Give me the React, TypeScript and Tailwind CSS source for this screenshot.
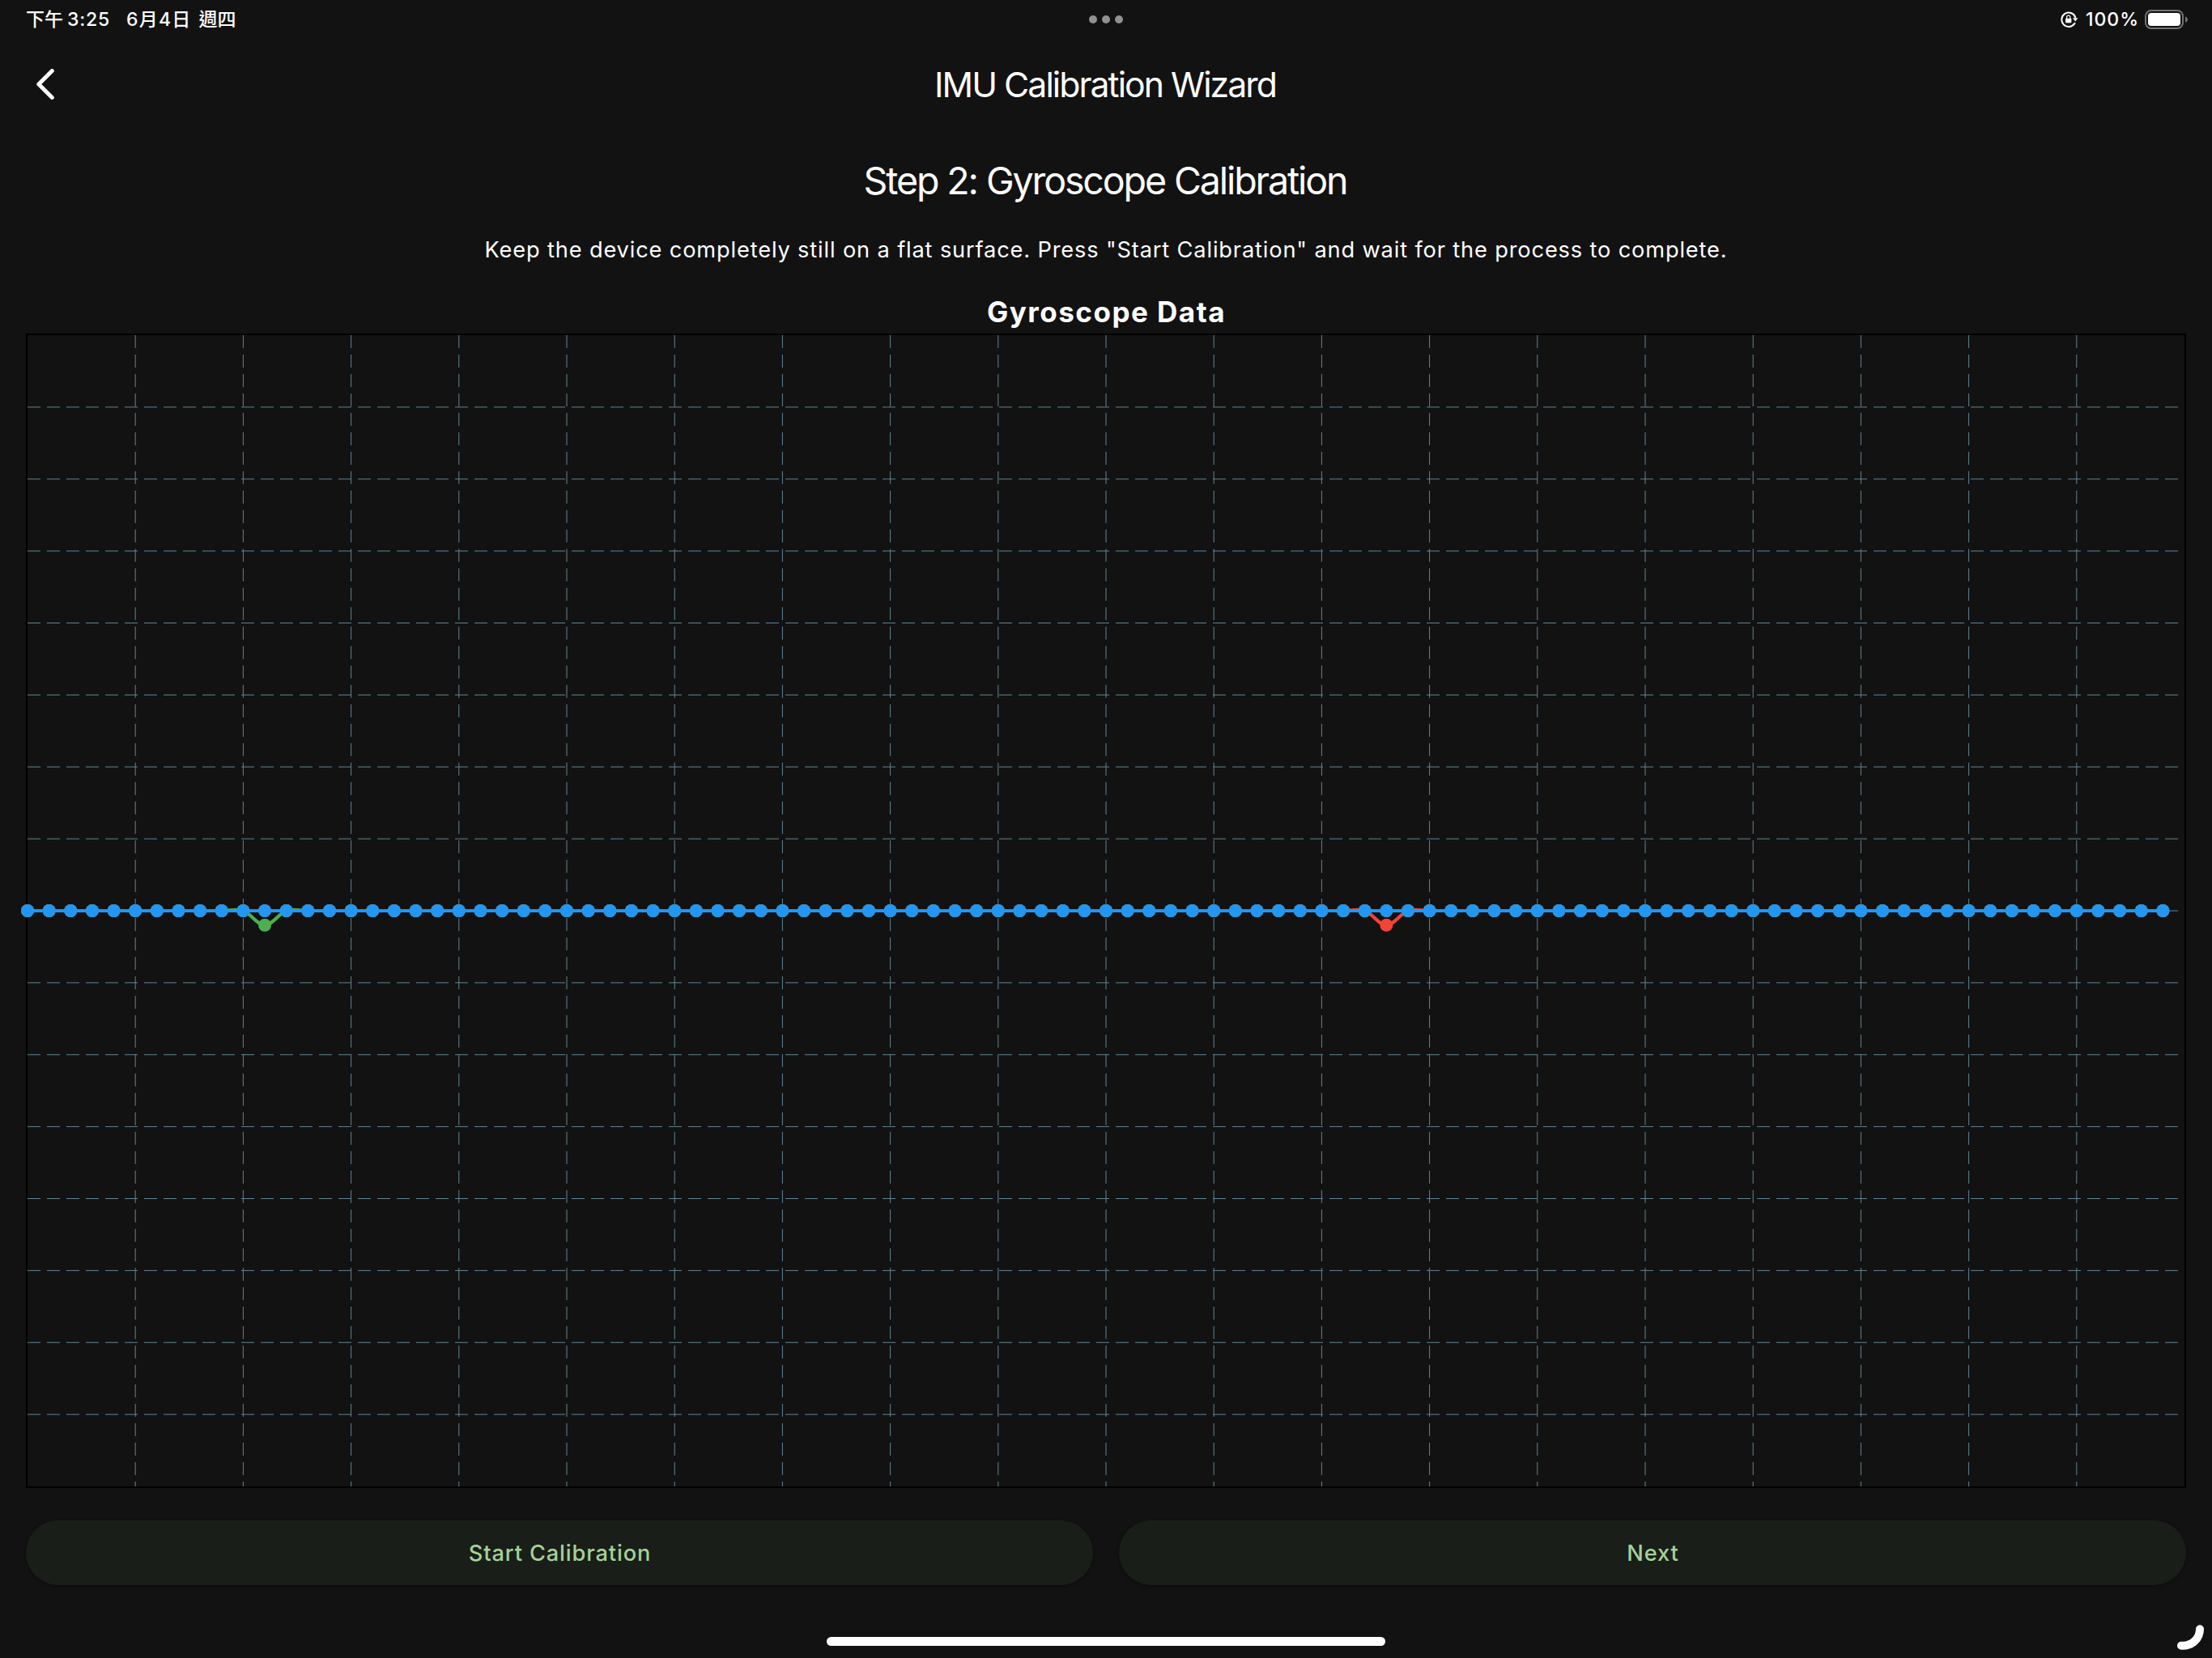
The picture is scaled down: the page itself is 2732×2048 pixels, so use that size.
import type { ReactNode } from 'react';

const W = 2664;
const H = 1422;
const BASE = H / 2;
const STEP = W / 100;
const DIP = H / 80;

type Point = { x: number; y: number };

function series(dipIndex: number): Point[] {
  return Array.from({ length: 100 }, (_, i) => ({
    x: i * STEP,
    y: i === dipIndex ? BASE + DIP : BASE,
  }));
}

function curve(points: Point[]): string {
  let d = `M${points[0].x} ${points[0].y}`;
  let tx = 0;
  let ty = 0;
  for (let i = 1; i < points.length; i++) {
    const prev = points[i - 1];
    const cur = points[i];
    const next = points[Math.min(i + 1, points.length - 1)];
    const c1x = prev.x + tx;
    const c1y = prev.y + ty;
    tx = ((next.x - prev.x) / 2) * 0.35;
    ty = ((next.y - prev.y) / 2) * 0.35;
    d += `C${c1x} ${c1y} ${cur.x - tx} ${cur.y - ty} ${cur.x} ${cur.y}`;
  }
  return d;
}

const SERIES = [
  { color: '#f44336', points: series(63) },
  { color: '#4caf50', points: series(11) },
  { color: '#2196f3', points: series(-1) },
];

function Chart() {
  return (
    <div className="h-[1426px] w-full border-2 border-black">
      <svg className="block h-[1422px] w-[2664px] overflow-visible" viewBox={`0 0 ${W} ${H}`} fill="none">
        <g stroke="#618494" strokeWidth="1" strokeDasharray="16 8">
          {Array.from({ length: 19 }, (_, i) => {
            const x = ((i + 1) * W) / 20;
            return <line key={i} x1={x} y1={0} x2={x} y2={H} />;
          })}
          {Array.from({ length: 15 }, (_, i) => {
            const y = ((i + 1) * H) / 16;
            return <line key={i} x1={0} y1={y} x2={W} y2={y} />;
          })}
        </g>
        {SERIES.map((s) => (
          <g key={s.color}>
            <path d={curve(s.points)} stroke={s.color} strokeWidth="4.2" />
            {s.points.map((p, i) => (
              <circle key={i} cx={p.x} cy={p.y} r="8" fill={s.color} />
            ))}
          </g>
        ))}
      </svg>
    </div>
  );
}

function StatusBar() {
  return (
    <header className="grid h-12 grid-cols-[1fr_42px_1fr] items-center px-8 text-[23px] font-medium">
      <div className="flex items-center leading-none">
        <span>下午</span>
        <span className="ml-[5px] tracking-[0.8px]">3:25</span>
        <span className="ml-5 tracking-[1.2px]">6月4日</span>
        <span className="ml-[9px]">週四</span>
      </div>
      <div className="flex justify-between">
        <i className="size-[10px] rounded-full bg-[#919191]" />
        <i className="size-[10px] rounded-full bg-[#919191]" />
        <i className="size-[10px] rounded-full bg-[#919191]" />
      </div>
      <div className="-mr-[3px] flex items-center justify-end">
        <svg className="h-5 w-[22px]" viewBox="0 0 22 20" fill="none">
          <path d="M17.4 14.9A8.7 8.7 0 1 1 18.2 7.3" stroke="#fff" strokeWidth="2" strokeLinecap="round" />
          <path d="M15 8.3h6.4L18.2 12.5z" fill="#fff" />
          <rect x="6" y="8.7" width="7.4" height="5.6" rx="1" fill="#fff" />
          <path d="M7.6 9V7.3a2.1 2.1 0 0 1 4.2 0V9" stroke="#fff" strokeWidth="1.2" />
        </svg>
        <span className="ml-[9px] leading-none tracking-[1px]">100%</span>
        <svg className="ml-[7px] h-6 w-[54px]" viewBox="0 0 54 24" fill="none">
          <rect x="1" y="1" width="46" height="22" rx="7" stroke="#727272" strokeWidth="2" />
          <rect x="4" y="4" width="40" height="16" rx="4" fill="#fff" />
          <path d="M50 8.2c4 1.8 4 5.8 0 7.6z" fill="#727272" />
        </svg>
      </div>
    </header>
  );
}

function PillButton({ children }: { children: ReactNode }) {
  return (
    <button className="flex h-20 flex-1 items-center justify-center rounded-full bg-[#191e18] pt-0.5 pl-px text-[27.2px] leading-10 font-medium tracking-[0.88px] text-[#a5d199] shadow-[0_2px_4px_rgba(0,0,0,0.3)]">
      {children}
    </button>
  );
}

export default function App() {
  return (
    <div className="relative flex h-[2048px] w-[2732px] flex-col overflow-hidden bg-[#121212] font-['Inter','Noto_Sans_CJK_TC',sans-serif] text-white">
      <StatusBar />
      <div className="grid h-28 grid-cols-[96px_1fr_96px] items-center">
        <svg className="ml-[45px] h-[38px] w-[22px]" viewBox="0 0 22 38" fill="none">
          <path d="M19.3 2.6 2.8 19l16.5 16.4" stroke="#fff" strokeWidth="5" strokeLinecap="round" strokeLinejoin="round" />
        </svg>
        <h1 className="pt-0.5 pr-0.5 text-center text-[42.7px] leading-[56px] tracking-[-1.93px]">IMU Calibration Wizard</h1>
      </div>
      <main className="flex flex-col items-center px-8 pt-[31px]">
        <h2 className="pr-0.5 text-[46.5px] leading-16 tracking-[-2.1px]">Step 2: Gyroscope Calibration</h2>
        <p className="mt-[34px] text-[27.2px] leading-10 tracking-[0.86px]">
          Keep the device completely still on a flat surface. Press "Start Calibration" and wait for the process to complete.
        </p>
        <h3 className="mt-[30px] mb-px pl-px text-[35px] leading-[52px] font-bold tracking-[1.5px]">Gyroscope Data</h3>
        <Chart />
        <div className="mt-10 flex w-full gap-8">
          <PillButton>Start Calibration</PillButton>
          <PillButton>Next</PillButton>
        </div>
      </main>
      <div className="absolute top-[2022px] left-[1021px] h-[11px] w-[690px] rounded-full bg-white" />
      <svg className="absolute right-0 bottom-0 h-12 w-12" viewBox="0 0 48 48" fill="none">
        <path d="M33 12.2C33 24 23.5 32.8 12 32.8H10" stroke="#fff" strokeWidth="10" strokeLinecap="round" />
      </svg>
    </div>
  );
}
